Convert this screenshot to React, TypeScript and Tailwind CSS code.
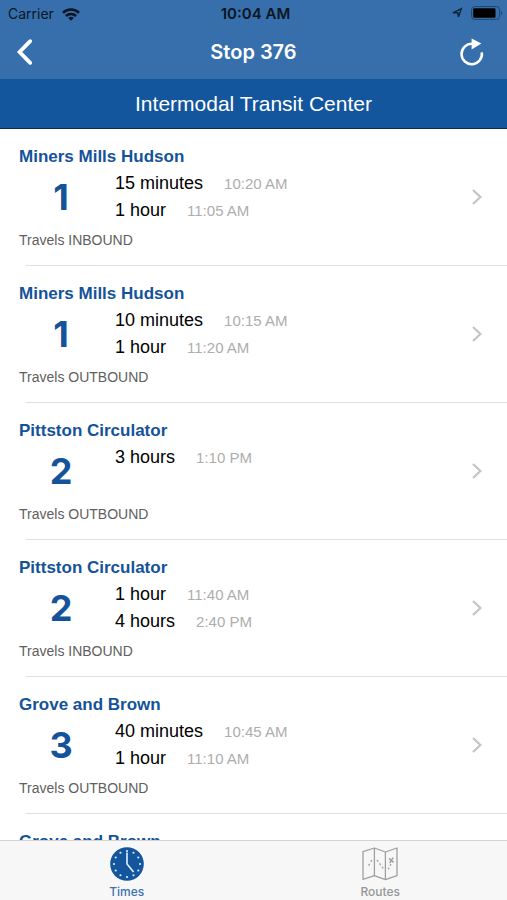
type Arrival = { wait: string; time: string };
type Route = { name: string; number: number; direction: string; arrivals: Arrival[] };

const ROUTES: Route[] = [
    {
        name: 'Miners Mills Hudson',
        number: 1,
        direction: 'INBOUND',
        arrivals: [
            { wait: '15 minutes', time: '10:20 AM' },
            { wait: '1 hour', time: '11:05 AM' },
        ],
    },
    {
        name: 'Miners Mills Hudson',
        number: 1,
        direction: 'OUTBOUND',
        arrivals: [
            { wait: '10 minutes', time: '10:15 AM' },
            { wait: '1 hour', time: '11:20 AM' },
        ],
    },
    {
        name: 'Pittston Circulator',
        number: 2,
        direction: 'OUTBOUND',
        arrivals: [{ wait: '3 hours', time: '1:10 PM' }],
    },
    {
        name: 'Pittston Circulator',
        number: 2,
        direction: 'INBOUND',
        arrivals: [
            { wait: '1 hour', time: '11:40 AM' },
            { wait: '4 hours', time: '2:40 PM' },
        ],
    },
    {
        name: 'Grove and Brown',
        number: 3,
        direction: 'OUTBOUND',
        arrivals: [
            { wait: '40 minutes', time: '10:45 AM' },
            { wait: '1 hour', time: '11:10 AM' },
        ],
    },
    {
        name: 'Grove and Brown',
        number: 3,
        direction: 'INBOUND',
        arrivals: [],
    },
];

const CLOCK_DOTS = Array.from({ length: 12 }, (_, i) => {
    const angle = (i * Math.PI) / 6;
    return { x: 17 + 13 * Math.sin(angle), y: 17 - 13 * Math.cos(angle) };
});

const WifiIcon = () => (
    <svg width="18" height="13" viewBox="0 0 18 13" fill="none" stroke="#0b1522" strokeWidth="2.5">
        <path d="M1 4.8a11.4 11.4 0 0 1 16 0" />
        <path d="M3.9 8a7.3 7.3 0 0 1 10.2 0" />
        <path d="M9 12.8 6.2 10a4 4 0 0 1 5.6 0z" fill="#0b1522" stroke="none" />
    </svg>
);

const LocationIcon = () => (
    <svg width="12" height="12" viewBox="0 0 12 12" fill="none" stroke="#10233b" strokeWidth="1.4" strokeLinejoin="miter">
        <path d="M10.4 1.6 7.4 10 6.8 5.6 1.8 5.8z" />
    </svg>
);

const BatteryIcon = () => (
    <svg width="32" height="14" viewBox="0 0 32 14">
        <rect x="0.6" y="0.6" width="28" height="12.8" rx="3" fill="none" stroke="#1f4570" strokeWidth="1" />
        <rect x="2.2" y="2.2" width="22.3" height="9.6" rx="1.2" fill="#000" />
        <path d="M30 4.7c1.6.6 1.6 4 0 4.6z" fill="#1f4570" />
    </svg>
);

const BackIcon = () => (
    <svg width="18" height="28" viewBox="0 0 18 28" fill="none" stroke="#fff" strokeWidth="3.8" strokeLinecap="round" strokeLinejoin="miter">
        <path d="M14.2 3.2 3.6 14l10.6 10.8" />
    </svg>
);

const RefreshIcon = () => (
    <svg width="26" height="28" viewBox="0 0 26 28" fill="none">
        <path d="M22.8 14.4A10.2 10.2 0 1 1 13.4 5.8" stroke="#fff" strokeWidth="2.5" />
        <path d="M12.6 0.4 22.4 5.6l-9.8 6z" fill="#fff" />
    </svg>
);

const ChevronIcon = () => (
    <svg width="12" height="18" viewBox="0 0 12 18" fill="none" stroke="#c4c4c8" strokeWidth="2.2">
        <path d="m2 2 7.4 7L2 16" />
    </svg>
);

const ClockIcon = () => (
    <svg width="34" height="34" viewBox="0 0 34 34">
        <circle cx="17" cy="17" r="16.8" fill="#14569d" />
        {CLOCK_DOTS.map((dot, i) => (
            <circle key={i} cx={dot.x} cy={dot.y} r="1.1" fill="#dcebf8" />
        ))}
        <path d="M17 5.4V17l6.6 8" fill="none" stroke="#e4f0fa" strokeWidth="1.6" />
    </svg>
);

const MapIcon = () => (
    <svg width="36" height="34" viewBox="0 0 36 34" fill="none" stroke="#a0a0a0" strokeWidth="1.3" strokeLinejoin="round">
        <path d="M1 4.6 12.4 1l11 4L35 1v27.6l-11.6 4-11-4L1 32.4z" />
        <path d="M12.4 1v27.6M23.4 5v27.6" />
        <path d="m6.6 18.6 1-1.8m1.2-2 1-1.8M15 13l1.2 1.6m1.3 1.8 1.2 1.6m1.3 1.8 1.2 1.6M26 22l1.3-1.2m.7-2 1-1.8" strokeWidth="1.3" />
        <path d="m27 11.4 4.6 4m-.4-4.8-3.6 5.4" strokeWidth="1.4" />
    </svg>
);

const RouteRow = ({ route }: { route: Route }) => (
    <li>
        <a href="#" className="block">
            <div className="flex h-34 items-center pl-[19px] pr-6">
                <div className="flex-1">
                    <h2 className="pt-[2px] text-[17px] leading-5 font-bold text-[#14539a]">{route.name}</h2>
                    <div className="flex h-[58px]">
                        <span className="flex w-21 shrink-0 items-center justify-center pt-[2px] font-['Inter',sans-serif] text-4xl font-bold text-[#14539a]">
                            {route.number}
                        </span>
                        <div className="flex flex-col pl-3 pt-[3px]">
                            {route.arrivals.map((arrival) => (
                                <p key={arrival.time} className="flex items-center gap-[21px]">
                                    <span className="text-lg leading-[27px] text-black">{arrival.wait}</span>
                                    <span className="text-[15px] leading-[27px] text-[#adadad]">{arrival.time}</span>
                                </p>
                            ))}
                        </div>
                    </div>
                    <p className="pt-[5px] text-sm leading-5 text-[#606060]">Travels {route.direction}</p>
                </div>
                <ChevronIcon />
            </div>
            <div className="ml-[26px] h-px bg-[#dfdfe1]" />
        </a>
    </li>
);

export default function App() {
    return (
        <div className="flex h-screen flex-col bg-white font-['Liberation_Sans',Arial,sans-serif]">
            <header className="shrink-0 bg-[#376fad]">
                {/* Status bar */}
                <div className="grid h-7 grid-cols-3 items-center pl-2 pr-1 font-['Inter',sans-serif] text-sm text-[#0b1522]">
                    <div className="flex items-center gap-2">
                        <span>Carrier</span>
                        <WifiIcon />
                    </div>
                    <span className="text-center text-[15px] leading-5 font-semibold">10:04 AM</span>
                    <div className="flex items-center justify-end gap-2 pb-[2px]">
                        <LocationIcon />
                        <BatteryIcon />
                    </div>
                </div>

                {/* Navigation bar */}
                <div className="grid h-[51px] grid-cols-3 items-center px-4 pb-1">
                    <button type="button" aria-label="Back" className="justify-self-start">
                        <BackIcon />
                    </button>
                    <h1 className="text-center font-['Inter',sans-serif] text-xl font-semibold text-white">Stop 376</h1>
                    <button type="button" aria-label="Refresh" className="justify-self-end pr-[6px]">
                        <RefreshIcon />
                    </button>
                </div>
            </header>

            <div className="flex h-[50px] shrink-0 items-center justify-center border-b border-[#0b2d55] bg-[#14569d] text-[21px] text-white">
                Intermodal Transit Center
            </div>

            <main className="min-h-0 flex-1 overflow-y-auto [scrollbar-width:none]">
                <ul>
                    {ROUTES.map((route) => (
                        <RouteRow key={`${route.number}-${route.direction}`} route={route} />
                    ))}
                </ul>
            </main>

            {/* Tab bar */}
            <nav className="grid h-15 shrink-0 grid-cols-2 border-t border-[#d4d4d4] bg-[#f7f7f7] pt-[6px] font-['Inter',sans-serif] text-xs font-medium">
                <a href="#" aria-current="page" className="flex flex-col items-center gap-[3px] text-[#3a73b0]">
                    <ClockIcon />
                    Times
                </a>
                <a href="#" className="flex flex-col items-center gap-[3px] text-[#969696]">
                    <MapIcon />
                    Routes
                </a>
            </nav>
        </div>
    );
}
